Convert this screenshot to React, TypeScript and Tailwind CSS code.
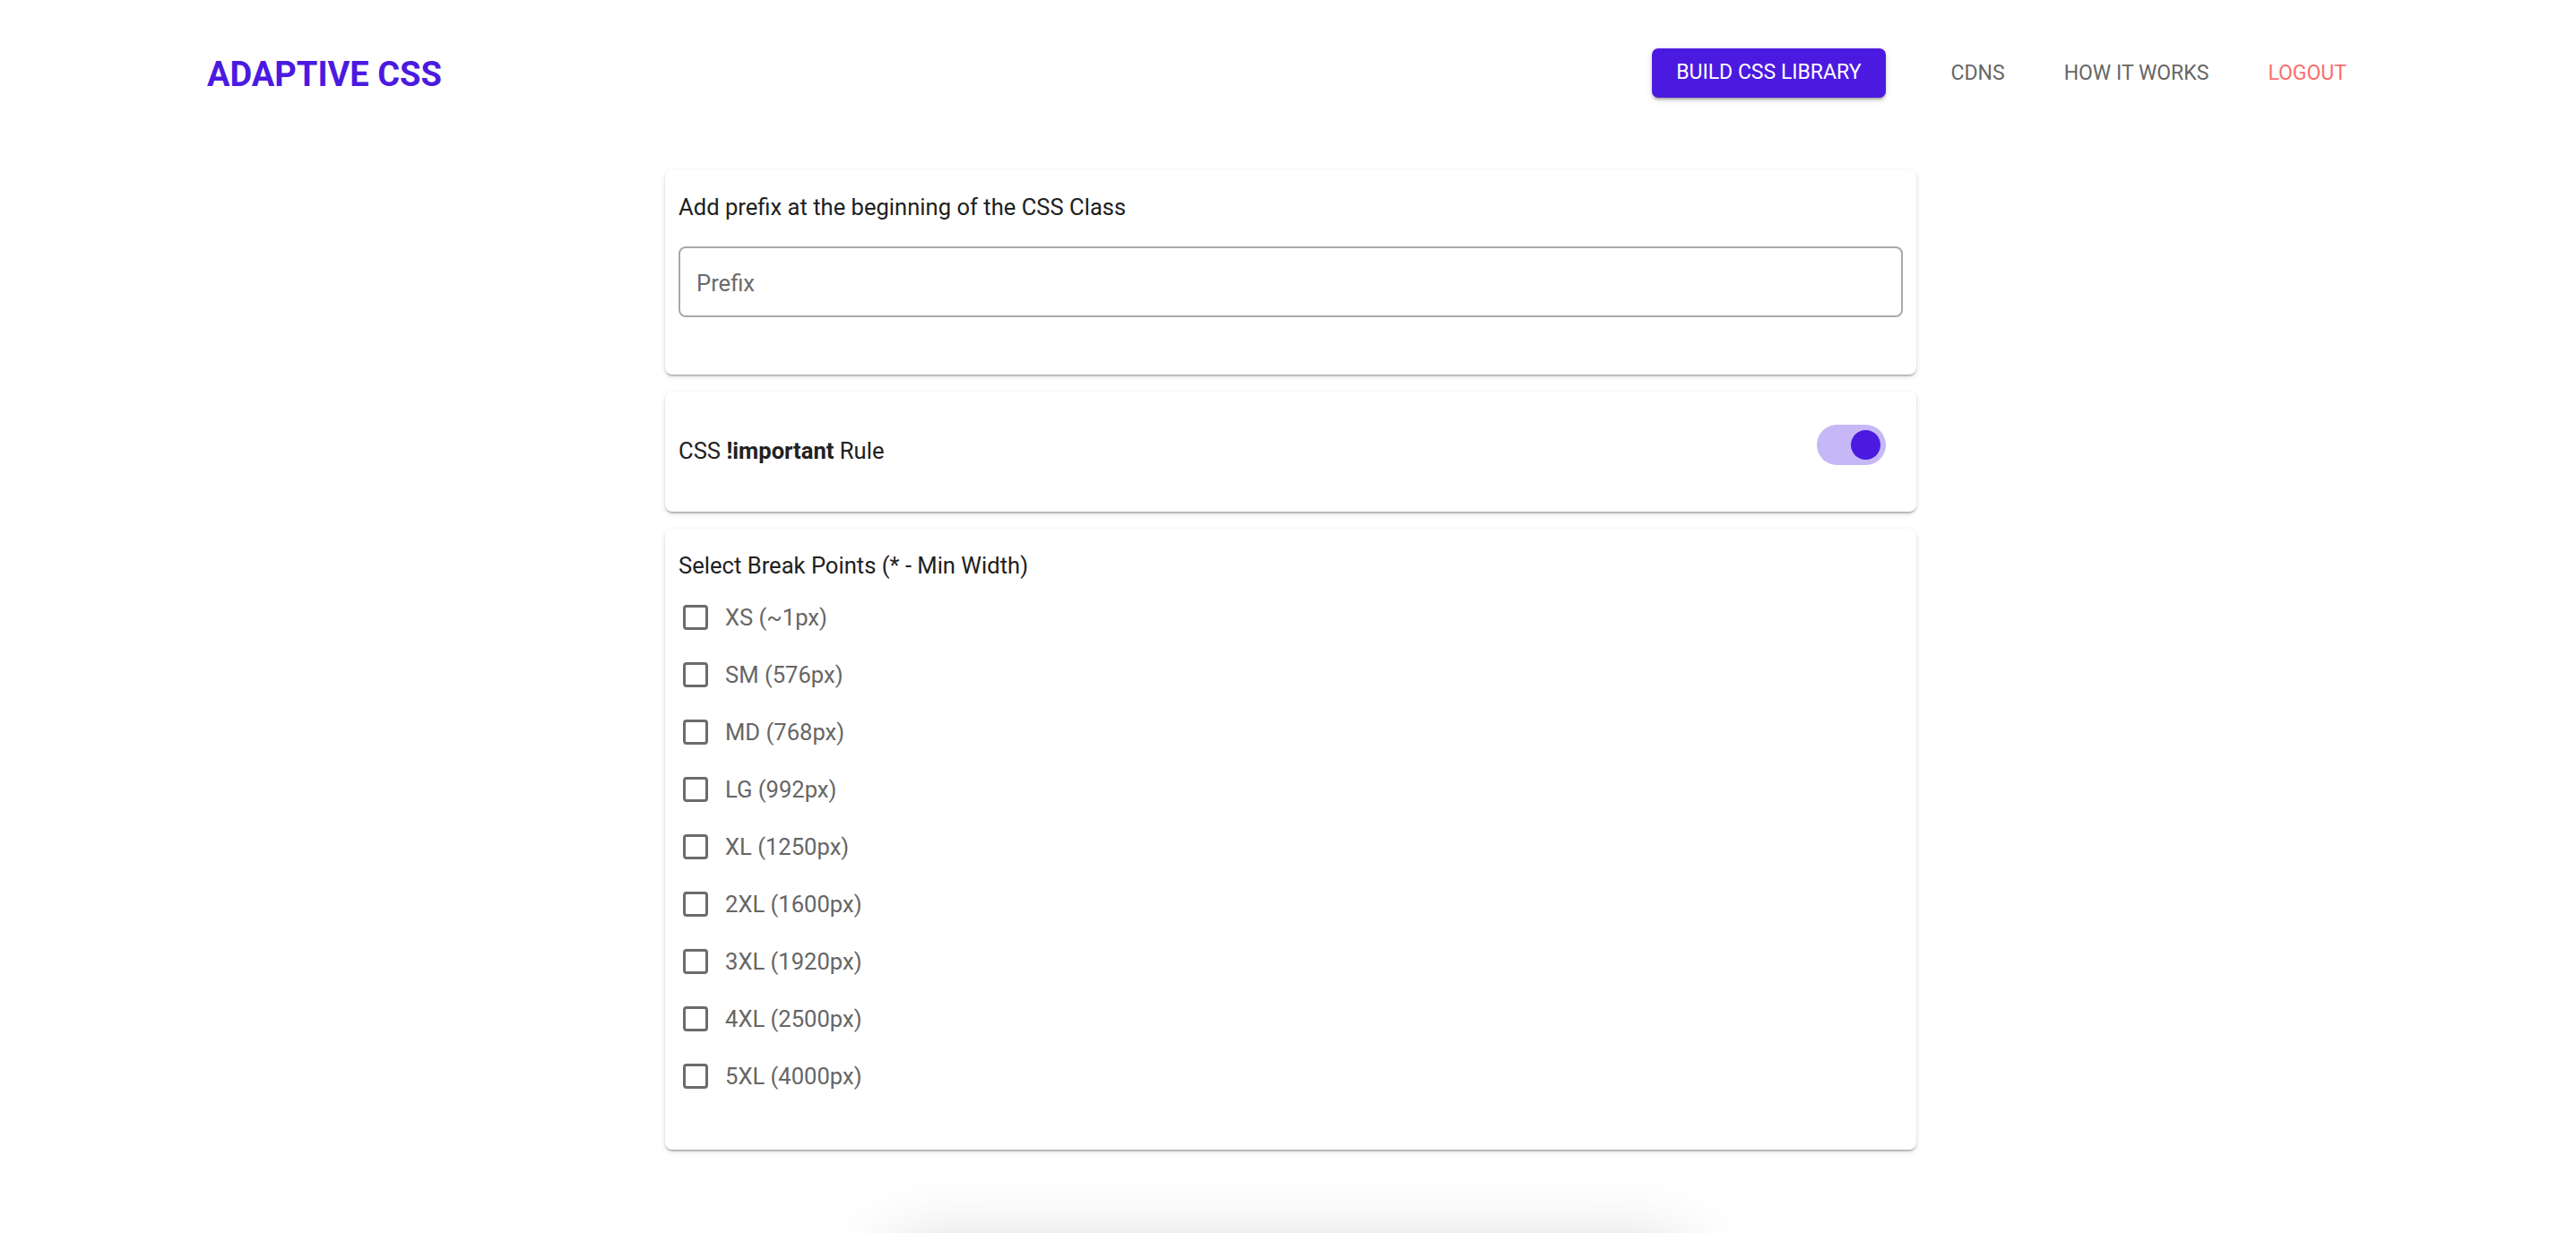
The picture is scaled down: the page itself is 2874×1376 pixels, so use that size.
import { useState } from "react";

const breakPoints = [
  "XS (~1px)",
  "SM (576px)",
  "MD (768px)",
  "LG (992px)",
  "XL (1250px)",
  "2XL (1600px)",
  "3XL (1920px)",
  "4XL (2500px)",
  "5XL (4000px)",
];

const cardClass =
  "bg-white rounded-[8px] shadow-[0_3px_2px_-2px_rgba(0,0,0,0.2),0_2px_2px_0_rgba(0,0,0,0.14),0_2px_6px_0_rgba(0,0,0,0.12)]";

export default function App() {
  const [important, setImportant] = useState(true);
  const [checked, setChecked] = useState<string[]>([]);

  const toggle = (bp: string) => {
    setChecked((prev) => (prev.includes(bp) ? prev.filter((p) => p !== bp) : [...prev, bp]));
  };

  return (
    <div className="h-screen overflow-hidden bg-white font-['Roboto','Liberation_Sans',sans-serif]">
      <header className="h-[163px] flex items-center justify-between pl-[231px] pr-[223px]">
        <h1 className="mt-[2px] text-[38px] font-bold text-[#4b1ae0] leading-none">ADAPTIVE CSS</h1>
        <nav className="flex items-center">
          <button className="h-[55px] px-[27px] mr-[40px] bg-[#4b1ae0] text-white text-[23px] rounded-[7px] shadow-[0_4px_2px_-3px_rgba(0,0,0,0.25),0_3px_3px_0_rgba(0,0,0,0.14),0_2px_8px_0_rgba(0,0,0,0.12)]">
            BUILD CSS LIBRARY
          </button>
          <a className="mt-[2px] px-[33px] text-[23px] text-[#666666]">CDNS</a>
          <a className="mt-[2px] px-[33px] text-[23px] text-[#666666]">HOW IT WORKS</a>
          <a className="mt-[2px] px-[33px] text-[23px] text-[#fa6e6e]">LOGOUT</a>
        </nav>
      </header>

      <main className="pt-[27px]">
        <div className="w-[1396px] ml-[742px] flex flex-col gap-[19px]">
          {/* prefix */}
          <div className={`${cardClass} px-[15px] pt-[22px] pb-[64px]`}>
            <p className="text-[25.6px] leading-[38px] text-[#212121]">
              Add prefix at the beginning of the CSS Class
            </p>
            <input
              placeholder="Prefix"
              className="mt-[25px] w-full h-[79px] px-[18px] pt-[2px] text-[25.6px] text-[#212121] placeholder:text-[#6b6b6b] border-[2px] border-[#a9a9a9] rounded-[8px] outline-none"
            />
          </div>

          {/* important */}
          <div className={`${cardClass} h-[134px] flex items-center justify-between pl-[15px] pr-[34px]`}>
            <p className="mb-[2px] text-[25.6px] text-[#212121]">
              CSS <b className="font-bold">!important</b> Rule
            </p>
            <button
              onClick={() => setImportant(!important)}
              className={`mb-[16px] w-[77px] h-[45px] rounded-full p-[6px] flex items-center ${
                important ? "bg-[#c6b7f6] justify-end" : "bg-[#bdbdbd] justify-start"
              }`}
            >
              <span
                className={`w-[33px] h-[33px] rounded-full ${important ? "bg-[#4b1ae0]" : "bg-[#fafafa]"}`}
              />
            </button>
          </div>

          {/* break points */}
          <div className={`${cardClass} px-[15px] pt-[22px] pb-[50px]`}>
            <p className="text-[25.6px] leading-[38px] text-[#212121]">Select Break Points (* - Min Width)</p>
            <div className="mt-[7px]">
              {breakPoints.map((bp) => (
                <label key={bp} className="h-[64px] flex items-center cursor-pointer" onClick={() => toggle(bp)}>
                  <span
                    className={`ml-[5px] w-[28px] h-[28px] rounded-[4px] border-[3px] ${
                      checked.includes(bp) ? "border-[#4b1ae0] bg-[#4b1ae0]" : "border-[#6b6b6b]"
                    }`}
                  />
                  <span className="ml-[19px] text-[25.6px] text-[#666666]">{bp}</span>
                </label>
              ))}
            </div>
          </div>
        </div>

        {/* section below the fold, only its shadow shows */}
        <div className="w-[880px] h-[300px] mx-auto mt-[117px] bg-white rounded-[8px] shadow-[0_0_90px_rgba(0,0,0,0.22)]" />
      </main>
    </div>
  );
}
